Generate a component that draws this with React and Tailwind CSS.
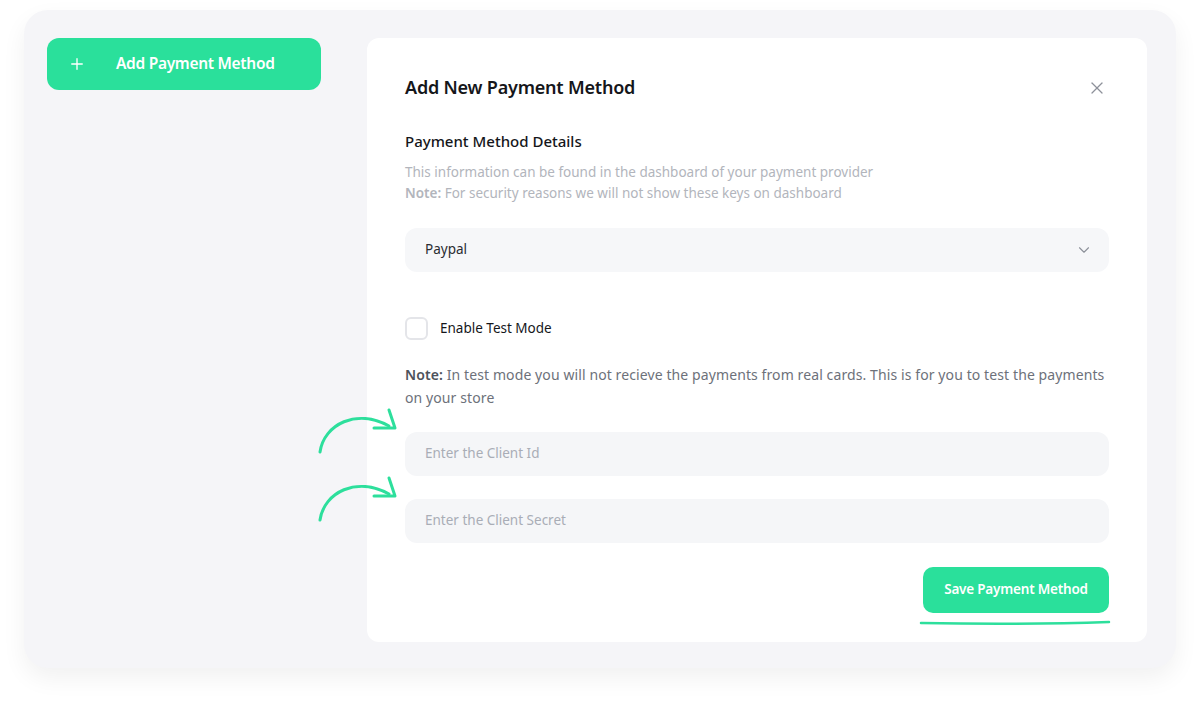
import { X, ChevronDown, Plus } from "lucide-react";

function CurvedArrow() {
  return (
    <svg width="90" height="50" viewBox="0 0 90 50" fill="none" className="text-[#2ddf9c]">
      <path d="M3 46 C 7 18, 40 2, 72 20" stroke="currentColor" strokeWidth="3" strokeLinecap="round" fill="none" />
      <path d="M72 4 L78 22 L57 22" stroke="currentColor" strokeWidth="3" strokeLinecap="round" strokeLinejoin="round" fill="none" />
    </svg>
  );
}

function Field({ placeholder }) {
  return (
    <div className="h-[44px] rounded-xl bg-[#f5f6f8] flex items-center px-5 text-[13.5px] text-[#a9adb6]">
      {placeholder}
    </div>
  );
}

export default function App() {
  return (
    <div className="w-[1200px] h-[704px] bg-white pt-[10px] px-[24px] font-['Noto_Sans',sans-serif]">
      <div className="h-[658px] rounded-[24px] bg-[#f5f5f8] shadow-[0_10px_24px_rgba(0,0,0,0.06)] flex pt-[28px] pl-[23px] pr-[29px]">
        <div className="w-[274px] shrink-0">
          <button className="w-full h-[52px] rounded-xl bg-[#2ae09b] flex items-center pl-[21px] text-white">
            <Plus size={18} strokeWidth={1.8} />
            <span className="ml-[30px] text-[15.5px] font-semibold tracking-[-0.3px]">Add Payment Method</span>
          </button>
        </div>

        <div className="relative ml-[46px] flex-1 h-[604px] rounded-xl bg-white px-[38px] pt-[36px]">
          <div className="flex items-center justify-between">
            <h2 className="text-[18px] font-semibold text-[#15161a] tracking-[-0.2px]">Add New Payment Method</h2>
            <X size={20} strokeWidth={1.5} className="text-[#8d919a] mr-[2px]" />
          </div>

          <h3 className="mt-[29px] text-[15px] font-medium text-[#15161a]">Payment Method Details</h3>
          <p className="mt-[9px] text-[13.5px] leading-[21px] text-[#b2b5bc]">
            This information can be found in the dashboard of your payment provider
            <br />
            <span className="font-semibold">Note:</span> For security reasons we will not show these keys on dashboard
          </p>

          <div className="mt-[24px] h-[44px] rounded-xl bg-[#f6f7f9] flex items-center justify-between pl-5 pr-4 text-[13.5px] text-[#2a2c31]">
            <span>Paypal</span>
            <ChevronDown size={18} strokeWidth={1.5} className="text-[#8d919a]" />
          </div>

          <label className="mt-[45px] flex items-center">
            <span className="w-[23px] h-[23px] rounded-md border-2 border-[#e4e5e9] bg-white" />
            <span className="ml-[12px] text-[13.5px] text-[#15161a]">Enable Test Mode</span>
          </label>

          <p className="mt-[23px] text-[14px] tracking-[0.1px] leading-[23px] text-[#6d717a]">
            <span className="font-semibold text-[#4d525b]">Note:</span> In test mode you will not recieve the payments from real cards. This is for you to test the payments on your store
          </p>

          <div className="mt-[23px] flex flex-col gap-[23px]">
            <Field placeholder="Enter the Client Id" />
            <Field placeholder="Enter the Client Secret" />
          </div>

          <div className="mt-[24px] flex justify-end">
            <div className="flex flex-col items-end">
              <button className="w-[186px] h-[46px] rounded-[10px] bg-[#2ae09b] text-white text-[13.5px] font-semibold tracking-[-0.2px]">
                Save Payment Method
              </button>
              <svg width="192" height="8" viewBox="0 0 192 8" className="mt-[6px] mr-[-2px]">
                <path d="M2 4 C 60 5, 130 5, 190 3" stroke="#2ddf9c" strokeWidth="2.5" strokeLinecap="round" fill="none" />
              </svg>
            </div>
          </div>

          <div className="absolute left-[-50px] top-[368px]">
            <CurvedArrow />
          </div>
          <div className="absolute left-[-50px] top-[436px]">
            <CurvedArrow />
          </div>
        </div>
      </div>
    </div>
  );
}
